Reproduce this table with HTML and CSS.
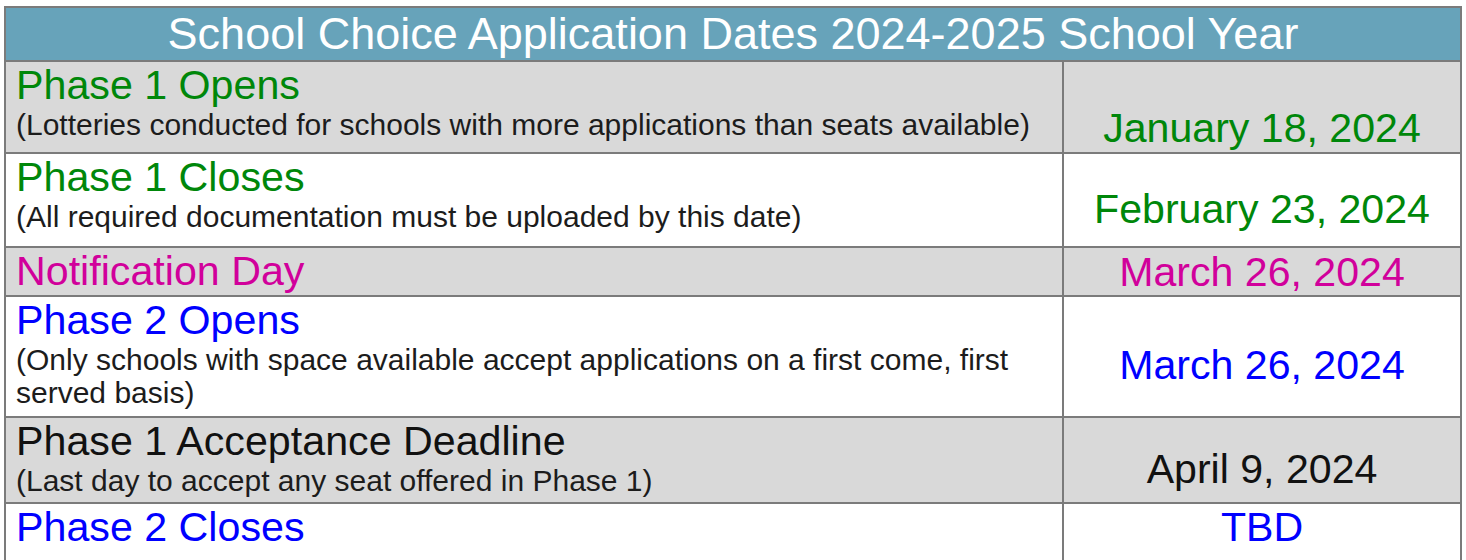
FILE: index.html
```html
<!DOCTYPE html>
<html lang="en">
<head>
<meta charset="utf-8">
<title>School Choice Application Dates</title>
<link rel="stylesheet" href="styles.css">
</head>
<body>
<div class="page">
  <table class="dates">
    <colgroup>
      <col class="col-event">
      <col class="col-date">
    </colgroup>
    <thead>
      <tr>
        <th colspan="2" class="head">School Choice Application Dates 2024-2025 School Year</th>
      </tr>
    </thead>
    <tbody>
      <tr class="shade row-a">
        <td class="event">
          <div class="title green">Phase 1 Opens</div>
          <div class="note">(Lotteries conducted for schools with more applications than seats available)</div>
        </td>
        <td class="date green date-bottom">January 18, 2024</td>
      </tr>
      <tr class="row-b">
        <td class="event">
          <div class="title green">Phase 1 Closes</div>
          <div class="note">(All required documentation must be uploaded by this date)</div>
        </td>
        <td class="date green">February 23, 2024</td>
      </tr>
      <tr class="shade row-c">
        <td class="event">
          <div class="title magenta">Notification Day</div>
        </td>
        <td class="date magenta date-flat">March 26, 2024</td>
      </tr>
      <tr class="row-d">
        <td class="event">
          <div class="title blue">Phase 2 Opens</div>
          <div class="note">(Only schools with space available accept applications on a first come, first<br>served basis)</div>
        </td>
        <td class="date blue">March 26, 2024</td>
      </tr>
      <tr class="shade row-e">
        <td class="event">
          <div class="title dark">Phase 1 Acceptance Deadline</div>
          <div class="note">(Last day to accept any seat offered in Phase 1)</div>
        </td>
        <td class="date dark">April 9, 2024</td>
      </tr>
      <tr class="row-f">
        <td class="event">
          <div class="title blue">Phase 2 Closes</div>
        </td>
        <td class="date blue date-flat date-top">TBD</td>
      </tr>
    </tbody>
  </table>
</div>
</body>
</html>
```

FILE: styles.css
```css
html, body {
  margin: 0;
  padding: 0;
  background: #ffffff;
}

body {
  font-family: "Liberation Sans", Arial, sans-serif;
  color: #111111;
  overflow: hidden;
}

.page {
  padding: 6px 0 0 4px;
}

.dates {
  border-collapse: collapse;
  width: 1456px;
  table-layout: fixed;
}

.col-event {
  width: 1058px;
}

.col-date {
  width: 398px;
}

.dates th,
.dates td {
  border: 2px solid #7b7b7b;
  padding: 0;
}

.dates .head {
  background: #67a3ba;
  color: #ffffff;
  font-weight: normal;
  font-size: 45px;
  line-height: 52px;
  height: 52px;
  text-align: center;
}

.shade td {
  background: #d9d9d9;
}

.dates .event {
  padding: 0 0 0 10px;
  vertical-align: top;
}

.title {
  font-size: 41.2px;
  line-height: 46px;
}

.note {
  font-size: 30px;
  line-height: 33px;
  color: #1c1c1c;
}

.dates .row-a .event { padding-bottom: 11px; }
.dates .row-b .event { padding-bottom: 13px; }
.dates .row-c .event { padding-bottom: 1px; }
.dates .row-d .event { padding-bottom: 7px; }
.dates .row-e .event { padding-bottom: 5px; }
.dates .row-f .event { padding-bottom: 14px; }

.dates .date {
  font-size: 41.1px;
  line-height: 46px;
  text-align: center;
  vertical-align: middle;
  padding-top: 17px;
}

.dates .date-bottom {
  vertical-align: bottom;
  padding: 0 0 1px;
}

.dates .date-flat {
  padding: 0;
}

.dates .date-top {
  vertical-align: top;
}

.green { color: #00870a; }
.magenta { color: #d1009b; }
.blue { color: #0000ff; }
.dark { color: #111111; }
```
